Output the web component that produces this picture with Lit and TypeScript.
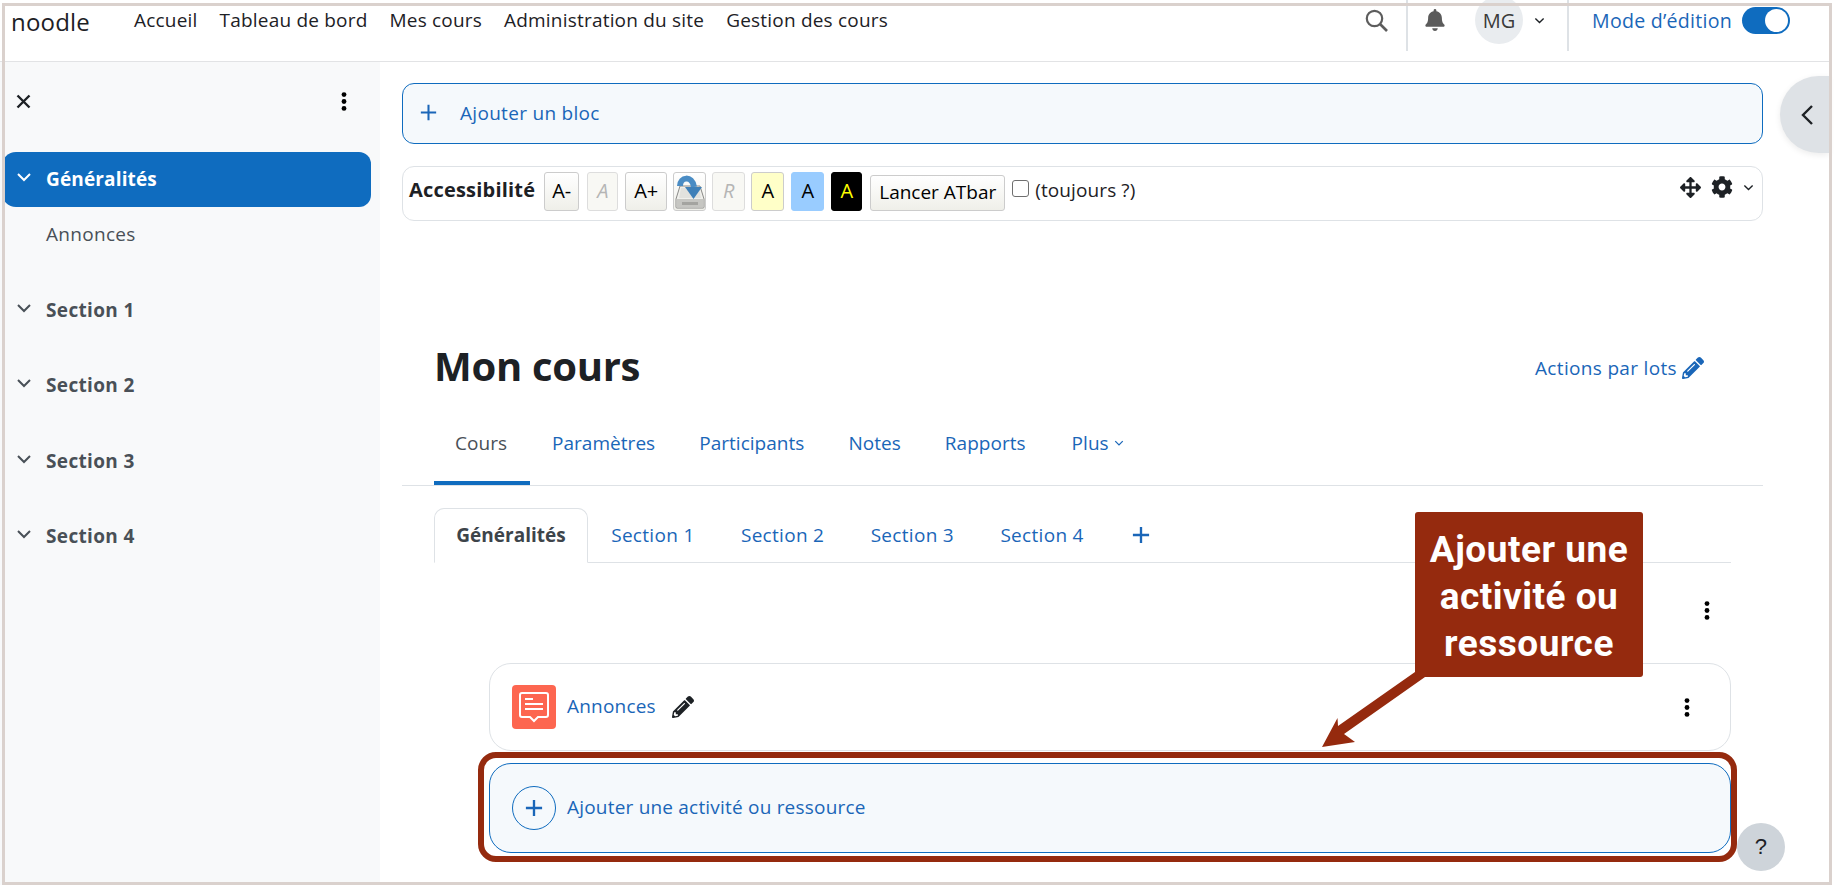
import { LitElement, html, css, svg } from "lit";
import { customElement } from "lit/decorators.js";

const chev = (w = 12) => html`<svg class="chev" width=${w} height=${w} viewBox="0 0 16 16"><path d="M2 5l6 6 6-6" fill="none" stroke="currentColor" stroke-width="2"/></svg>`;
const dots = html`<svg width="6" height="19" viewBox="0 0 6 19"><circle cx="3" cy="2.6" r="2.4"/><circle cx="3" cy="9.5" r="2.4"/><circle cx="3" cy="16.4" r="2.4"/></svg>`;
const pencil = (s: number) => html`<svg width=${s} height=${s} viewBox="0 0 512 512"><path fill="currentColor" d="M497.9 142.1l-46.1 46.1c-4.7 4.7-12.3 4.7-17 0l-111-111c-4.7-4.7-4.7-12.3 0-17l46.1-46.1c18.7-18.7 49.1-18.7 67.9 0l60.1 60.1c18.8 18.7 18.8 49.1 0 67.9zM284.2 99.8L21.6 362.4.4 483.9c-2.9 16.4 11.4 30.6 27.8 27.8l121.5-21.3 262.6-262.6c4.7-4.7 4.7-12.3 0-17l-111-111c-4.8-4.7-12.4-4.7-17.1 0zM124.1 339.9c-5.5-5.5-5.5-14.3 0-19.8l154-154c5.5-5.5 14.3-5.5 19.8 0s5.5 14.3 0 19.8l-154 154c-5.5 5.5-14.3 5.5-19.8 0zM88 424h48v36.3l-64.5 11.3-31.1-31.1L51.7 376H88v48z"/></svg>`;
const plus = (s: number, sw: number) => html`<svg width=${s} height=${s} viewBox="0 0 20 20"><path d="M10 1v18M1 10h18" stroke="currentColor" stroke-width=${sw} fill="none"/></svg>`;
const disk = html`<svg width="31" height="37" viewBox="0 0 31 37"><path d="M6 13h20l4 13v8a1 1 0 0 1-1 1H3a1 1 0 0 1-1-1v-8z" fill="#f0f0ec" stroke="#8a8a88"/><path d="M7 15h18l2 10H5z" fill="#e2e2de"/><rect x="2.5" y="26" width="27" height="8.5" fill="#c6c6c2"/><rect x="8" y="29" width="16" height="3" fill="#a4a4a0"/><path d="M6 13C6 4 18 2 20 14" fill="none" stroke="#4a8cc4" stroke-width="6"/><path d="M11 14h17l-8.500 12z" fill="#3f80b8"/></svg>`;

@customElement("app-root")
export class AppRoot extends LitElement {
  static styles = css`
    :host { display: block; width: 1835px; height: 894px; position: relative; overflow: hidden; background: #fff;
      font-family: "Open Sans", "Noto Sans", sans-serif; font-size: 19px; color: #1d2125; letter-spacing: 0.2px; }
    * { box-sizing: border-box; }
    svg { display: block; flex: none; }

    .frame { position: absolute; left: 2px; top: 3px; width: 1830px; height: 882px; border: 3px solid #dad1cd; pointer-events: none; z-index: 5; }

    header { height: 62px; width: 1829px; border-bottom: 1px solid #e2e3e5; display: flex; align-items: flex-start; padding-left: 11px; position: relative; }
    .brand { font-size: 24px; height: 44px; line-height: 44px; width: 123px; letter-spacing: 0.2px; }
    .nav { display: flex; height: 40px; align-items: center; gap: 22px; }
    .tools { margin-left: auto; display: flex; align-items: flex-start; padding-right: 39px; }
    .tools > .cell { height: 40px; display: flex; align-items: center; }
    .search { color: #5d5d5d; margin-right: 18px; }
    .divider { width: 2px; height: 51px; background: #dee2e6; }
    .bell { color: #5b5b5b; margin: 0 30px 0 17px; }
    .avatar { width: 48px; height: 48px; border-radius: 50%; background: #e9ecef; display: flex; align-items: center; justify-content: center; margin-top: -4px; font-size: 20px; color: #3a3a3a; letter-spacing: 0; }
    .uchev { margin: 0 22px 0 11px; color: #1d2125; }
    .mode { color: #1a66b8; font-size: 19.6px; margin: 0 10px 0 23px; letter-spacing: 0.25px; }
    .toggle { width: 48px; height: 27px; border-radius: 14px; background: #0f6cbf; display: flex; justify-content: flex-end; align-items: center; padding-right: 2px; }
    .toggle i { width: 23px; height: 23px; border-radius: 50%; background: #fff; display: block; }

    .body { display: flex; height: 823px; width: 1829px; }
    aside { width: 380px; flex: none; background: #f8f9fa; padding-left: 2px; }
    .side-top { height: 78px; display: flex; justify-content: space-between; align-items: center; padding: 0 33px 0 14px; margin-bottom: 12px; }
    .side-item { display: flex; align-items: center; height: 55px; border-radius: 14px 12px 12px 14px; width: 369px; font-weight: 700; color: #495057; padding: 0 0 1px 14px; gap: 14px; margin-bottom: 20.4px; letter-spacing: 0.35px; }
    .side-item.active { background: #0f6cbf; color: #fff; margin-bottom: 0; letter-spacing: 0.15px; }
    .side-sub { height: 55px; display: flex; align-items: center; padding: 0 0 2px 44px; color: #495057; margin-bottom: 21px; letter-spacing: 0.3px; }
    .side-item .chev { margin-top: -4px; }

    main { flex: 1; padding: 21px 66px 0 22px; min-width: 0; }
    .add-block { height: 61px; border: 1px solid #0f6cbf; border-radius: 12px; background: #f5f9fc; color: #1a66b8; display: flex; align-items: center; padding: 0 0 2px 17px; gap: 23px; letter-spacing: 0.3px; }
    .acc { margin-top: 22px; height: 55px; border: 1px solid #dee2e6; border-radius: 12px; display: flex; align-items: center; padding: 0 8px 5px 6px; }
    .acc b { font-size: 20px; margin: -3px 9px 0 0; }
    .atb { height: 39px; border: 1px solid #ccc; border-radius: 3px; background: linear-gradient(#fff, #efefe9); display: flex; align-items: center; justify-content: center; color: #000; flex: none; letter-spacing: 0; font-size: 20px; padding-bottom: 2px; }
    .atb.ico { padding: 0; }
    .atb.dis { color: #b5b5b5; font-style: italic; background: #f8f8f4; border-color: #ddd; }
    .atb.y { background: #ffffc8; }
    .atb.b { background: #99ccff; border-color: #9cf; }
    .atb.k { background: #000; color: #ff0; border-color: #000; }
    .atb.run { height: 36px; margin: 3px 7px 0 0; letter-spacing: 0; font-size: 19px; }
    .chk { width: 17px; height: 17px; border: 1px solid #6f6f6f; border-radius: 3px; background: #fff; margin: -6px 6px 0 0; }
    .tou { margin-top: -2px; letter-spacing: 0.1px; }
    .acc-r { margin: -8px 0 0 auto; display: flex; align-items: center; gap: 10px; color: #1d2125; }

    .title { display: flex; justify-content: space-between; align-items: center; margin-top: 122px; padding: 0 59px 0 32px; height: 46px; }
    h1 { margin: -2px 0 0; font-size: 40px; font-weight: 700; letter-spacing: -0.3px; }
    .bulk { display: flex; align-items: center; gap: 5px; color: #1a66b8; margin-top: 4px; letter-spacing: 0.33px; }
    .tabs { display: flex; margin-top: 36px; height: 61px; border-bottom: 1px solid #dee2e6; padding-left: 32px; letter-spacing: 0.03px; }
    .tab { display: flex; align-items: center; gap: 5px; padding: 0 22px 20px; color: #1a66b8; height: 60px; border-bottom: 4px solid transparent; }
    .tab.on { color: #495057; border-bottom-color: #0f6cbf; padding: 0 23px 20px 21px; }
    .tab.more { margin-left: 2px; }
    .sect { margin: 22px 32px 0; height: 55px; border-bottom: 1px solid #dee2e6; display: flex; letter-spacing: 0.3px; }
    .st { display: flex; align-items: center; color: #1a66b8; padding: 0 23.2px 1px; height: 54px; }
    .st.on { height: 55px; border: 1px solid #dee2e6; border-bottom-color: #fff; border-radius: 10px 10px 0 0; color: #3d444a; font-weight: 700; width: 154px; justify-content: center; padding: 0 0 1px; letter-spacing: 0; }
    .st.p { padding-left: 25px; }
    .sdots { display: flex; justify-content: flex-end; padding-right: 53px; margin-top: 38px; height: 19px; }
    .activity { margin: 43px 32px 0 87px; height: 88px; border: 1px solid #dee2e6; border-radius: 22px; display: flex; align-items: center; padding: 0 40px 0 22px; }
    .aicon { width: 44px; height: 44px; border-radius: 4px; background: #fd6650; display: flex; align-items: center; justify-content: center; margin-right: 11px; }
    .alink { color: #1a66b8; margin: -2px 16px 0 0; }
    .spacer { flex: 1; }
    .addact { margin: 12px 32px 0 87px; height: 90px; border: 1px solid #0f6cbf; border-radius: 22px; background: #f5f9fc; display: flex; align-items: center; padding-left: 22px; color: #1a66b8; gap: 11px; }
    .addact span { margin-top: -2px; }
    .ring { width: 44px; height: 44px; border-radius: 50%; border: 1px solid #0f6cbf; display: flex; align-items: center; justify-content: center; }

    .drawer { position: absolute; left: 1780px; top: 76px; width: 49px; height: 77px; background: #dee2e6; border-radius: 39px 0 0 39px; display: flex; align-items: center; padding-left: 20px; box-shadow: 0 2px 6px rgba(0,0,0,.08); }
    .help { position: absolute; left: 1737px; top: 823px; width: 48px; height: 48px; border-radius: 50%; background: #ced4da; display: flex; align-items: center; justify-content: center; font-size: 22px; font-family: "Liberation Sans", sans-serif; }
    .redbox { position: absolute; left: 478px; top: 752px; width: 1259px; height: 110px; border: 6px solid #952a0e; border-radius: 18px; pointer-events: none; }
    .callout { position: absolute; left: 1415px; top: 512px; width: 228px; height: 165px; background: #952a0e; border-radius: 3px; color: #fff; font-family: Roboto, sans-serif; font-weight: 700; font-size: 37px; line-height: 47px; text-align: center; padding-top: 14px; letter-spacing: 0.5px; }
    .arrow { position: absolute; left: 1310px; top: 660px; }
  `;

  render() {
    const nav = ["Accueil", "Tableau de bord", "Mes cours", "Administration du site", "Gestion des cours"];
    const acc = [
      ["", "A-", 35, 8], ["dis", "A", 31, 7], ["", "A+", 42, 6], ["ico", "", 33, 6], ["dis", "R", 33, 6],
      ["y", "A", 33, 7], ["b", "A", 33, 7], ["k", "A", 31, 8],
    ] as [string, string, number, number][];
    return html`
      <header>
        <div class="brand">noodle</div>
        <div class="nav">${nav.map((n) => html`<span>${n}</span>`)}</div>
        <div class="tools">
          <div class="cell search"><svg width="23" height="23" viewBox="0 0 23 23"><circle cx="9.5" cy="9.5" r="7.7" fill="none" stroke="currentColor" stroke-width="2.2"/><path d="M15 15l7 7" stroke="currentColor" stroke-width="2.6"/></svg></div>
          <div class="divider"></div>
          <div class="cell bell"><svg width="20" height="22" viewBox="0 0 448 512"><path fill="currentColor" d="M224 512c35.32 0 63.97-28.65 63.97-64H160.03c0 35.35 28.65 64 63.97 64zm215.39-149.71c-19.32-20.76-55.47-51.99-55.47-154.29 0-77.7-54.48-139.9-127.94-155.16V32c0-17.67-14.32-32-31.98-32s-31.98 14.33-31.98 32v20.84C118.56 68.1 64.08 130.3 64.08 208c0 102.3-36.15 133.53-55.47 154.29-6 6.45-8.66 14.16-8.61 21.71.11 16.4 12.98 32 32.1 32h383.8c19.12 0 32-15.6 32.1-32 .05-7.55-2.61-15.27-8.61-21.71z"/></svg></div>
          <div class="avatar">MG</div>
          <div class="cell uchev">${chev(11)}</div>
          <div class="divider"></div>
          <div class="cell mode">Mode d’édition</div>
          <div class="cell"><div class="toggle"><i></i></div></div>
        </div>
      </header>
      <div class="body">
        <aside>
          <div class="side-top">
            <svg width="15" height="15" viewBox="0 0 15 15"><path d="M1.5 1.5l12 12M13.5 1.500l-12 12" stroke="#1d2125" stroke-width="2.4"/></svg>
            ${dots}
          </div>
          <div class="side-item active">${chev(16)}<span>Généralités</span></div>
          <div class="side-sub">Annonces</div>
          ${[1, 2, 3, 4].map((n) => html`<div class="side-item">${chev(16)}<span>Section ${n}</span></div>`)}
        </aside>
        <main>
          <div class="add-block">${plus(17, 2.4)}<span>Ajouter un bloc</span></div>
          <div class="acc">
            <b>Accessibilité</b>
            ${acc.map(([c, t, w, g]) => html`<div class="atb ${c}" style="width:${w}px;margin-right:${g}px">${c === "ico" ? disk : t}</div>`)}
            <div class="atb run" style="width:135px">Lancer ATbar</div>
            <div class="chk"></div>
            <span class="tou">(toujours ?)</span>
            <div class="acc-r">
              <svg width="21" height="21" viewBox="0 0 512 512"><path fill="currentColor" d="M352.201 425.775l-79.196 79.196c-9.373 9.373-24.568 9.373-33.941 0l-79.196-79.196c-15.119-15.119-4.411-40.971 16.971-40.97h51.162L228 284H127.196v51.162c0 21.382-25.851 32.09-40.971 16.971L7.029 272.937c-9.373-9.373-9.373-24.569 0-33.941L86.225 159.8c15.119-15.119 40.971-4.411 40.971 16.971V228H228V127.196h-51.23c-21.382 0-32.09-25.851-16.971-40.971l79.196-79.196c9.373-9.373 24.568-9.373 33.941 0l79.196 79.196c15.119 15.119 4.411 40.971-16.971 40.971h-51.162V228h100.804v-51.162c0-21.382 25.851-32.09 40.97-16.971l79.196 79.196c9.373 9.373 9.373 24.569 0 33.941L425.773 352.2c-15.119 15.119-40.971 4.411-40.97-16.971V284H284v100.804h51.23c21.382 0 32.09 25.851 16.971 40.971z"/></svg>
              <svg width="22" height="22" viewBox="0 0 512 512"><path fill="currentColor" d="M487.4 315.7l-42.6-24.6c4.3-23.2 4.3-47 0-70.2l42.6-24.6c4.9-2.8 7.1-8.6 5.5-14-11.1-35.6-30-67.8-54.7-94.6-3.8-4.1-10-5.1-14.8-2.3L380.8 110c-17.9-15.4-38.5-27.3-60.8-35.1V25.8c0-5.6-3.9-10.5-9.4-11.7-36.7-8.2-74.3-7.8-109.2 0-5.5 1.2-9.4 6.1-9.4 11.7V75c-22.2 7.9-42.8 19.8-60.8 35.1L88.7 85.5c-4.9-2.8-11-1.9-14.8 2.3-24.7 26.7-43.6 58.9-54.7 94.6-1.7 5.4.6 11.2 5.5 14L67.3 221c-4.3 23.2-4.3 47 0 70.2l-42.6 24.6c-4.9 2.8-7.1 8.6-5.5 14 11.1 35.6 30 67.8 54.7 94.6 3.8 4.1 10 5.1 14.8 2.3l42.6-24.6c17.9 15.4 38.5 27.3 60.8 35.1v49.2c0 5.6 3.9 10.5 9.4 11.7 36.7 8.2 74.3 7.8 109.2 0 5.5-1.2 9.4-6.1 9.4-11.7v-49.2c22.2-7.9 42.8-19.8 60.8-35.1l42.6 24.6c4.9 2.8 11 1.9 14.8-2.3 24.7-26.7 43.6-58.9 54.7-94.6 1.5-5.5-.7-11.3-5.6-14.1zM256 336c-44.1 0-80-35.9-80-80s35.9-80 80-80 80 35.9 80 80-35.9 80-80 80z"/></svg>
              ${chev(11)}
            </div>
          </div>
          <div class="title"><h1>Mon cours</h1><div class="bulk"><span>Actions par lots</span>${pencil(22)}</div></div>
          <div class="tabs">
            <div class="tab on">Cours</div><div class="tab">Paramètres</div><div class="tab">Participants</div><div class="tab">Notes</div><div class="tab">Rapports</div>
            <div class="tab more">Plus ${chev(10)}</div>
          </div>
          <div class="sect">
            <div class="st on">Généralités</div>
            ${[1, 2, 3, 4].map((n) => html`<div class="st">Section ${n}</div>`)}
            <div class="st p">${plus(18, 2.6)}</div>
          </div>
          <div class="sdots">${dots}</div>
          <div class="activity">
            <div class="aicon"><svg width="34" height="34" viewBox="0 0 34 34" fill="none" stroke="#fff" stroke-width="2"><path d="M5 3h24a2 2 0 0 1 2 2v20a2 2 0 0 1-2 2h-8l-4 4-4-4H5a2 2 0 0 1-2-2V5a2 2 0 0 1 2-2z"/><path d="M8 9h8M8 14h18M8 19h18"/></svg></div>
            <span class="alink">Annonces</span>
            ${pencil(22)}
            <div class="spacer"></div>
            ${dots}
          </div>
          <div class="addact"><div class="ring">${plus(18, 2.6)}</div><span>Ajouter une activité ou ressource</span></div>
        </main>
      </div>
      <div class="drawer"><svg width="14" height="22" viewBox="0 0 14 22"><path d="M12 2L3 11l9 9" fill="none" stroke="#1d2125" stroke-width="2.4"/></svg></div>
      <div class="help">?</div>
      <div class="redbox"></div>
      <svg class="arrow" width="120" height="100" viewBox="0 0 120 100">${svg`<path fill="#952a0e" d="M105 12L115 17L34 74L45 82L12 87L27.5 58L28 66z"/>`}</svg>
      <div class="callout">Ajouter une<br>activité ou<br>ressource</div>
      <div class="frame"></div>
    `;
  }
}
